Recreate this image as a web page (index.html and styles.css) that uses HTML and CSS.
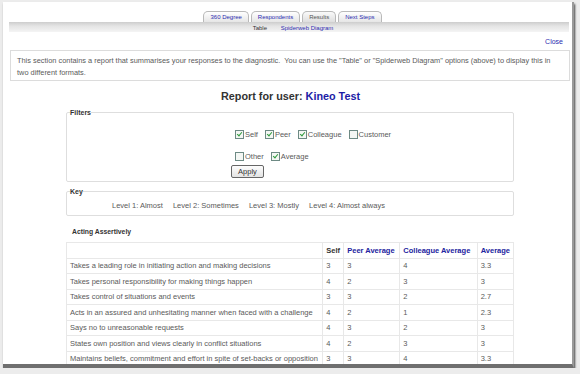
FILE: index.html
```html
<!DOCTYPE html>
<html>

<head>
    <title>Report - Results</title>
    <link rel="stylesheet" href="styles.css">
</head>

<body>
    <div class="page">
        <!-- main tabs -->
        <div class="tabs">
            <a class="tab" href="#">360 Degree</a>
            <a class="tab" href="#">Respondents</a>
            <span class="tab active">Results</span>
            <a class="tab" href="#">Next Steps</a>
        </div>
        <div class="subtabs">
            <span class="sub-current">Table</span>
            <a href="#">Spiderweb Diagram</a>
        </div>

        <div class="close-row"><a href="#">Close</a></div>

        <div class="intro">
            This section contains a report that summarises your responses to the diagnostic.&nbsp; You can use the "Table" or "Spiderweb Diagram" options (above) to display this in<br>
            two different formats.
        </div>

        <h1 class="report-title">Report for user: <a href="#">Kineo Test</a></h1>

        <div class="report">
            <fieldset class="filters">
                <legend>Filters</legend>
                <div class="filter-body">
                    <div class="filter-row">
                        <label><span class="check on"></span>Self</label>
                        <label><span class="check on"></span>Peer</label>
                        <label><span class="check on"></span>Colleague</label>
                        <label><span class="check"></span>Customer</label>
                    </div>
                    <div class="filter-row second">
                        <label><span class="check"></span>Other</label>
                        <label><span class="check on"></span>Average</label>
                    </div>
                    <button class="apply">Apply</button>
                </div>
            </fieldset>

            <fieldset class="key">
                <legend>Key</legend>
                <div class="key-body">
                    <span>Level 1: Almost</span>
                    <span>Level 2: Sometimes</span>
                    <span>Level 3: Mostly</span>
                    <span>Level 4: Almost always</span>
                </div>
            </fieldset>

            <h2 class="section-title">Acting Assertively</h2>
            <table class="results">
                <tr>
                    <th class="desc"></th>
                    <th class="self">Self</th>
                    <th class="peer"><a href="#">Peer Average</a></th>
                    <th class="coll"><a href="#">Colleague Average</a></th>
                    <th class="avg"><a href="#">Average</a></th>
                </tr>
                <tr>
                    <td>Takes a leading role in initiating action and making decisions</td>
                    <td>3</td>
                    <td>3</td>
                    <td>4</td>
                    <td>3.3</td>
                </tr>
                <tr>
                    <td>Takes personal responsibility for making things happen</td>
                    <td>4</td>
                    <td>2</td>
                    <td>3</td>
                    <td>3</td>
                </tr>
                <tr>
                    <td>Takes control of situations and events</td>
                    <td>3</td>
                    <td>3</td>
                    <td>2</td>
                    <td>2.7</td>
                </tr>
                <tr>
                    <td>Acts in an assured and unhesitating manner when faced with a challenge</td>
                    <td>4</td>
                    <td>2</td>
                    <td>1</td>
                    <td>2.3</td>
                </tr>
                <tr>
                    <td>Says no to unreasonable requests</td>
                    <td>4</td>
                    <td>3</td>
                    <td>2</td>
                    <td>3</td>
                </tr>
                <tr>
                    <td>States own position and views clearly in conflict situations</td>
                    <td>4</td>
                    <td>2</td>
                    <td>3</td>
                    <td>3</td>
                </tr>
                <tr>
                    <td>Maintains beliefs, commitment and effort in spite of set-backs or opposition</td>
                    <td>3</td>
                    <td>3</td>
                    <td>4</td>
                    <td>3.3</td>
                </tr>
            </table>
        </div>
    </div>
</body>

</html>
```

FILE: styles.css
```css
/* page frame */
body {
    margin: 0;
    background: #ececec;
    font-family: "Liberation Sans", Arial, sans-serif;
    font-size: 7.5px;
    color: #5a5a5a;
    overflow: hidden;
}

a {
    color: #2b2bb0;
    text-decoration: none;
}

.page {
    margin: 2px 0 0 3px;
    width: 571px;
    height: 366px;
    background: #fff;
    border-right: 2px solid #9a9a9a;
    border-bottom: 4px solid #6f6f6f;
    box-shadow: 1px 2px 2px #444;
    padding: 9px 0 0 6px;
    box-sizing: border-box;
    overflow: hidden;
}

/* tabs */
.tabs {
    display: flex;
    justify-content: center;
    gap: 2px;
    height: 11px;
    padding-left: 4px;
}

.tab {
    border: 1px solid #b9b9b9;
    border-bottom: none;
    border-radius: 5px 5px 0 0;
    background: linear-gradient(#ffffff, #e6e6e6);
    font-size: 6px;
    line-height: 10px;
    padding: 0 6px;
}

.tab.active {
    color: #555;
    background: linear-gradient(#fafafa, #dedede);
}

.subtabs {
    height: 10px;
    margin-right: 3px;
    background: linear-gradient(#cdcdcd, #e4e4e4 40%, #f4f4f4);
    text-align: center;
    font-size: 6px;
    line-height: 6px;
    padding: 3px 0 0 8px;
    box-sizing: border-box;
    color: #333;
}

.subtabs .sub-current {
    margin-right: 12px;
}

.close-row {
    text-align: right;
    padding: 6px 9px 0 0;
    height: 12px;
    font-size: 7px;
}

.intro {
    margin: 0 2px 0 1px;
    border: 1px solid #dcdcdc;
    padding: 4px 6px 6px 6px;
    line-height: 12px;
    height: 31px;
    box-sizing: border-box;
    font-size: 7.4px;
    white-space: nowrap;
}

.report-title {
    margin: 9px 0 0 0;
    font-size: 10.8px;
    text-align: center;
    color: #333;
    height: 16px;
}

.report-title a {
    color: #1c1ca6;
}

.report {
    width: 448px;
    margin-left: 57px;
}

/* fieldsets */
fieldset {
    margin: 0;
    border: 1px solid #dedede;
    border-radius: 2px;
    padding: 0;
}

legend {
    font-weight: bold;
    font-size: 7px;
    color: #333;
    padding: 0;
    margin-left: 3px;
}

.filters {
    height: 71px;
    margin-top: 3px;
}

.filter-body {
    padding: 14px 0 0 168px;
}

.filter-row {
    display: flex;
    gap: 7px;
    line-height: 8px;
}

.filter-row.second {
    margin-top: 13px;
}

.filter-row label {
    display: flex;
    align-items: center;
}

.check {
    width: 7px;
    height: 7px;
    border: 1px solid #6d8a84;
    background: #f4f7f4;
    margin-right: 1px;
    position: relative;
}

.check.on::after {
    content: "";
    position: absolute;
    left: 2px;
    top: 0;
    width: 2px;
    height: 4px;
    border: solid #2f9a3c;
    border-width: 0 1.5px 1.5px 0;
    transform: rotate(40deg);
}

.apply {
    display: block;
    margin: 4px 0 0 -4px;
    font-family: "Liberation Sans", Arial, sans-serif;
    font-size: 7.5px;
    color: #333;
    background: linear-gradient(#fdfdfd, #e3e3e3);
    border: 1px solid #666;
    border-radius: 2px;
    padding: 0 5px;
    width: 33px;
    height: 13px;
    line-height: 10px;
}

.key {
    height: 26px;
    margin-top: 6px;
}

.key-body {
    padding: 6px 0 0 45px;
}

.key span {
    margin-right: 8px;
}

.section-title {
    font-size: 6.8px;
    color: #333;
    margin: 12px 0 0 6px;
    height: 14px;
}

/* results table */
.results {
    border-collapse: collapse;
    width: 448px;
}

.results th,
.results td {
    border: 1px solid #e8e8e8;
    height: 14.5px;
    padding: 0 3px;
    text-align: left;
    white-space: nowrap;
}

.results th {
    font-weight: bold;
    color: #333;
}

.results th a {
    color: #22229e;
}

.results .desc {
    width: 250px;
}

.results .self {
    width: 14px;
}

.results .peer {
    width: 50px;
}

.results .coll {
    width: 72px;
}
```
